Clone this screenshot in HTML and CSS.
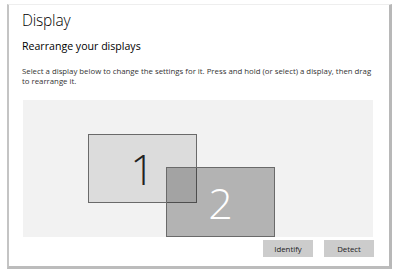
FILE: index.html
```html
<!DOCTYPE html>
<html lang="en">
<head>
  <meta charset="UTF-8" />
  <title>Display</title>
  <link rel="stylesheet" href="styles.css">
</head>
<body>
  <div class="window">
    <h1 class="title">Display</h1>
    <h2 class="subtitle">Rearrange your displays</h2>
    <p class="hint">Select a display below to change the settings for it. Press and hold (or select) a display, then drag to rearrange it.</p>

    <div class="arrange">
      <div class="monitor first">1</div>
      <div class="monitor second">2</div>
    </div>

    <div class="actions">
      <button class="btn">Identify</button>
      <button class="btn">Detect</button>
    </div>
  </div>
</body>
</html>
```

FILE: styles.css
```css
body {
  margin: 0;
  background: #fff;
  font-family: "Open Sans", "Noto Sans", sans-serif;
  color: #000;
}
.window {
  box-sizing: border-box;
  width: 385px;
  height: 265px;
  margin: 4px 0 0 7px;
  padding: 5px 16px 0 14px;
  border-top: 1px solid #eeeeee;
  border-left: 2px solid #c4c4c4;
  border-right: 3px solid #b8b8b8;
  border-bottom: 3px solid #bcbcbc;
}
.title {
  margin: 0 0 0 -1px;
  font-size: 15.5px;
  line-height: 20px;
  font-weight: 300;
  letter-spacing: -0.2px;
}
.subtitle {
  margin: 9px 0 0 -1px;
  font-size: 10.6px;
  line-height: 14px;
  font-weight: 400;
}
.hint {
  margin: 13px -6px 0 -1px;
  font-size: 7.8px;
  line-height: 10px;
  color: #333;
}
.arrange {
  position: relative;
  height: 137px;
  margin-top: 14px;
  background: #f2f2f2;
}
.monitor {
  position: absolute;
  box-sizing: border-box;
  width: 109px;
  height: 69px;
  border: 1px solid #6a6a6a;
  display: flex;
  align-items: center;
  justify-content: center;
  font-size: 43px;
  font-weight: 300;
}
.first {
  left: 65px;
  top: 34px;
  background: #dcdcdc;
  color: #222;
}
.second {
  left: 143px;
  top: 67px;
  height: 70px;
  background: rgba(0, 0, 0, 0.26);
  color: #fff;
}
.actions {
  display: flex;
  justify-content: flex-end;
  gap: 11px;
  margin-top: 3px;
  margin-right: -1px;
}
.btn {
  width: 50px;
  height: 17px;
  padding: 0;
  border: none;
  background: #cccccc;
  font-family: "Open Sans", "Noto Sans", sans-serif;
  font-size: 7.8px;
  color: #222;
}
```
